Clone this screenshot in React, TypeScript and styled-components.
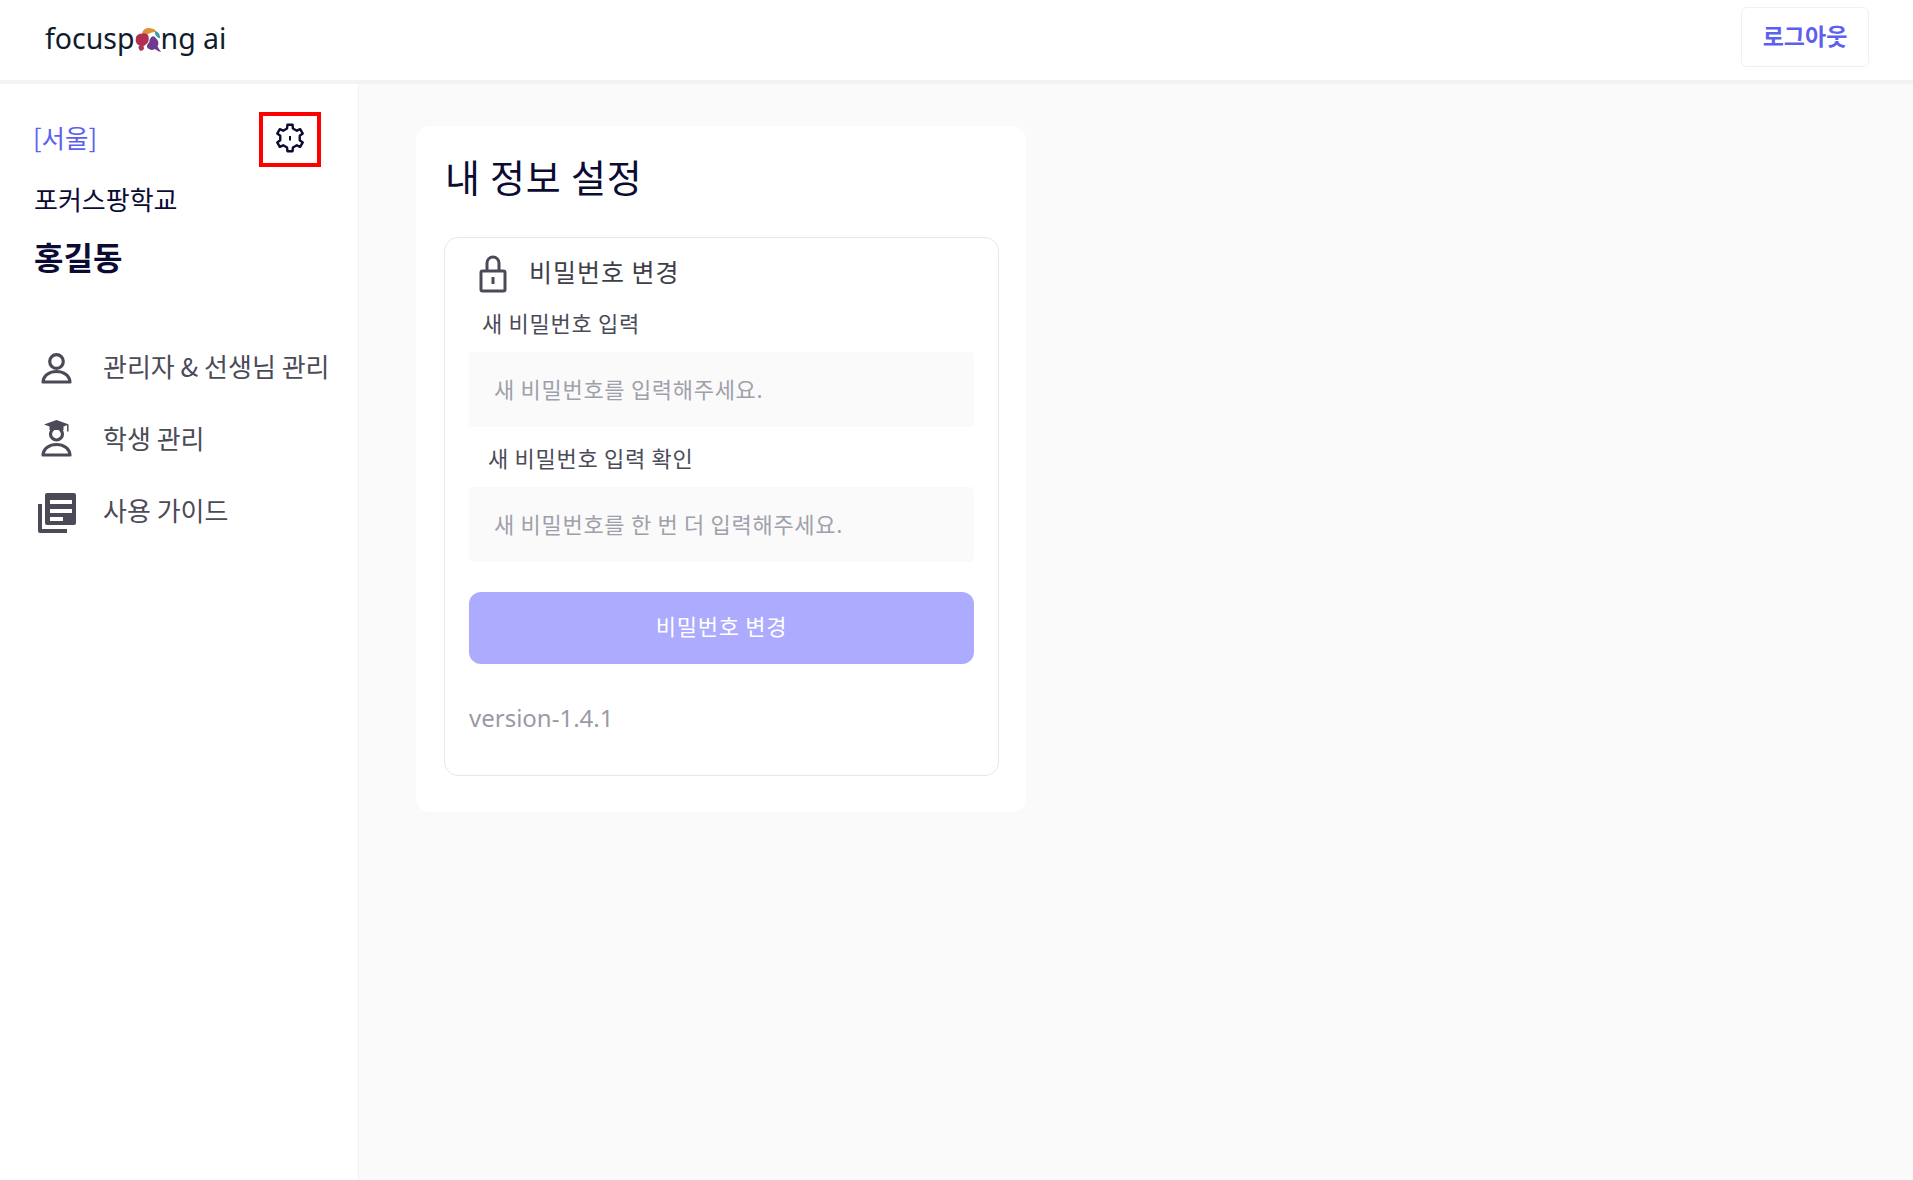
import React from "react";
import styled, { createGlobalStyle } from "styled-components";

const Global = createGlobalStyle`
  html, body { margin: 0; padding: 0; height: 100%; }
  body { font-family: "Noto Sans", "Noto Sans CJK KR", sans-serif; background: #fff; overflow: hidden; }
  * { box-sizing: border-box; }
`;
const Page = styled.div`display:flex;flex-direction:column;width:1913px;height:1180px;`;
const Header = styled.header`
  display:flex;align-items:flex-start;justify-content:space-between;height:84px;flex:none;
  padding:7px 44px 0 45px;background:#fff;border-bottom:4px solid #f3f3f4;
`;
const Logo = styled.div`
  display:flex;align-items:center;height:62px;font-size:28.500px;color:#0f1c2e;
`;
const LogoO = styled.svg`width:27px;height:26px;margin:4px -1px 0 0;`;
const LogoSpace = styled.span`white-space:pre;`;
const LogoutButton = styled.button`
  width:128px;height:60px;background:#fff;border:1px solid #f0f0f3;border-radius:6px;color:#5d5fef;
  font:600 23px "Noto Sans CJK KR", sans-serif;padding:0 0 4px;
`;
const Body = styled.div`display:flex;flex:1;min-height:0;`;
const Sidebar = styled.aside`
  width:359px;flex:none;background:#fff;border-right:1px solid #f3f3f4;padding:28px 0 0 34px;
  font-family:"Noto Sans CJK KR", sans-serif;
`;
const RegionRow = styled.div`display:flex;align-items:center;justify-content:space-between;width:287px;height:55px;`;
const Region = styled.span`font-size:25.500px;color:#5d5fef;font-weight:400;padding-bottom:7px;margin-left:-1px;`;
const GearBox = styled.div`
  display:flex;align-items:center;justify-content:center;width:62px;height:55px;border:4px solid #f00;padding-bottom:3px;
`;
const School = styled.div`font-size:26px;color:#0b0b33;margin-top:14px;line-height:36px;`;
const Name = styled.div`font-size:32px;font-weight:700;color:#0b0b33;margin-top:16px;line-height:46px;`;
const Nav = styled.nav`display:flex;flex-direction:column;gap:24px;margin-top:67px;`;
const NavItem = styled.a`
  display:flex;align-items:center;height:48px;font-size:26px;color:#4b4b58;gap:25px;font-weight:400;
`;
const NavLabel = styled.span`padding-bottom:10px;`;
const NavIcon = styled.svg`width:44px;height:44px;flex:none;color:#4b4b58;margin-bottom:3px;`;
const Main = styled.main`flex:1;background:#fafafa;padding:42px 0 0 57px;font-family:"Noto Sans CJK KR", sans-serif;`;
const Card = styled.section`
  width:610px;height:686px;background:#fff;border-radius:14px;padding:26px 27px 0 28px;
`;
const Title = styled.h1`margin:0 0 0 1px;font-size:38px;font-weight:400;color:#0b0b33;line-height:48px;padding-bottom:2px;letter-spacing:.8px;`;
const Inner = styled.div`
  height:539px;margin-top:35px;border:1px solid #e6e9ec;border-radius:14px;padding:16px 24px 0 24px;
`;
const SectionHead = styled.div`display:flex;align-items:center;gap:21px;padding-left:9px;height:40px;margin-bottom:12px;`;
const SectionTitle = styled.span`font-size:25px;color:#3f3f4a;letter-spacing:1px;padding-bottom:6px;`;
const Label = styled.label<{ $indent: number }>`
  display:block;padding-left:${(p) => p.$indent}px;font-size:22px;line-height:32px;color:#4b4b58;letter-spacing:.7px;
`;
const Field = styled.div`
  display:flex;align-items:center;height:75px;background:#fafafa;border-radius:4px;padding:0 0 4px 25px;margin:14px 0;
  font-size:22px;color:#a0a0ab;letter-spacing:.7px;
`;
const Submit = styled.button`
  display:block;width:505px;height:72px;margin-top:30px;border:0;border-radius:12px;background:#adabfe;color:#fff;
  font:400 22px "Noto Sans CJK KR", sans-serif;letter-spacing:.7px;padding:0 0 6px;
`;
const Version = styled.div`margin-top:36px;font:400 24px/36px "Noto Sans", sans-serif;color:#9a9aa5;`;

const Brain = () => (
  <LogoO viewBox="0 0 30 28">
    <path d="M8 6c1-4 5-6 9-5s6 1 6 4c-3 0-6 1-8 2S10 8 8 6z" fill="#e0913a" />
    <path d="M1 12c0-3 3-5 6-5 3-1 8 0 8 3 1 4 0 7-3 9-2 2-5 2-7 1-3-1-5-4-4-8z" fill="#b2304f" />
    <path d="M5 20c2-1 5 0 5 3s-4 4-5 2-2-4 0-5z" fill="#a33a52" />
    <path d="M18 11c2-2 4-1 5 1 3 2 4 6 2 9 1 2 2 4 4 6-3 0-5-2-7-3-3 2-6 1-8-1-2-3 1-5 2-7 0-2 1-4 2-5z" fill="#6d3a90" />
    <path d="M23 4c3 1 5 4 5 8-2 0-4-2-5-3-1-2-1-4 0-5z" fill="#3d9aa8" />
  </LogoO>
);

function gearPath(cx: number, cy: number, outer: number, inner: number) {
  const pts: string[] = [];
  const pt = (r: number, deg: number) => {
    const a = (deg * Math.PI) / 180;
    return `${(cx + r * Math.cos(a)).toFixed(2)} ${(cy + r * Math.sin(a)).toFixed(2)}`;
  };
  for (let i = 0; i < 6; i++) {
    const c = -90 + i * 60;
    pts.push(pt(inner, c - 17), pt(outer, c - 11), pt(outer, c + 11), pt(inner, c + 17));
  }
  return `M${pts.join("L")}Z`;
}

const Gear = () => (
  <svg width="30" height="30" viewBox="0 0 30 30" fill="none" stroke="#0b0b33" strokeWidth="2.400" strokeLinejoin="round">
    <path d={gearPath(15, 15, 13.500, 10)} />
    <path d="M15 13v4.500" strokeWidth="2" />
  </svg>
);

const PersonIcon = () => (
  <NavIcon viewBox="0 0 44 44" fill="none" stroke="currentColor" strokeWidth="3.200">
    <circle cx="22.500" cy="14.500" r="6.800" />
    <path d="M9 35c.500-6.500 6.500-10.500 13.500-10.500S35.500 28.500 36 35z" strokeLinejoin="round" />
  </NavIcon>
);

const StudentIcon = () => (
  <NavIcon viewBox="0 0 44 44" fill="none" stroke="currentColor" strokeWidth="3.200">
    <path d="M22.500 1l12.500 4.500-5.500 2v3.500h-14V7.500l-5.500-2z" fill="currentColor" stroke="none" />
    <path d="M33.800 6v6.500" strokeWidth="1.500" />
    <circle cx="22.500" cy="15" r="6" />
    <path d="M9 36c.500-6.500 6.500-10.500 13.500-10.500S35.500 29.500 36 36z" strokeLinejoin="round" />
  </NavIcon>
);

const BookIcon = () => (
  <NavIcon viewBox="0 0 44 44">
    <path d="M4 13h4v25h25v4H6a2 2 0 0 1-2-2z" fill="currentColor" />
    <path fillRule="evenodd" d="M13 2h27a2 2 0 0 1 2 2v28a2 2 0 0 1-2 2H13a2 2 0 0 1-2-2V4a2 2 0 0 1 2-2zm3 7v4h22V9zm0 9v4h22v-4zm0 8v4h13v-4z" fill="currentColor" />
  </NavIcon>
);

const Lock = () => (
  <svg width="30" height="38" viewBox="0 0 30 38" fill="none" stroke="#4b4b58" strokeWidth="3">
    <rect x="3" y="16" width="24" height="20" rx="1.500" />
    <path d="M9 16V8a6 6 0 0 1 12 0v8" />
    <path d="M15 22v7" />
  </svg>
);

export default function App() {
  return (
    <Page>
      <Global />
      <Header>
        <Logo>
          focusp<Brain />ng<LogoSpace> ai</LogoSpace>
        </Logo>
        <LogoutButton>로그아웃</LogoutButton>
      </Header>
      <Body>
        <Sidebar>
          <RegionRow>
            <Region>[서울]</Region>
            <GearBox><Gear /></GearBox>
          </RegionRow>
          <School>포커스팡학교</School>
          <Name>홍길동</Name>
          <Nav>
            <NavItem><PersonIcon /><NavLabel>관리자 &amp; 선생님 관리</NavLabel></NavItem>
            <NavItem><StudentIcon /><NavLabel>학생 관리</NavLabel></NavItem>
            <NavItem><BookIcon /><NavLabel>사용 가이드</NavLabel></NavItem>
          </Nav>
        </Sidebar>
        <Main>
          <Card>
            <Title>내 정보 설정</Title>
            <Inner>
              <SectionHead><Lock /><SectionTitle>비밀번호 변경</SectionTitle></SectionHead>
              <Label $indent={13}>새 비밀번호 입력</Label>
              <Field>새 비밀번호를 입력해주세요.</Field>
              <Label $indent={19}>새 비밀번호 입력 확인</Label>
              <Field>새 비밀번호를 한 번 더 입력해주세요.</Field>
              <Submit>비밀번호 변경</Submit>
              <Version>version-1.4.1</Version>
            </Inner>
          </Card>
        </Main>
      </Body>
    </Page>
  );
}
